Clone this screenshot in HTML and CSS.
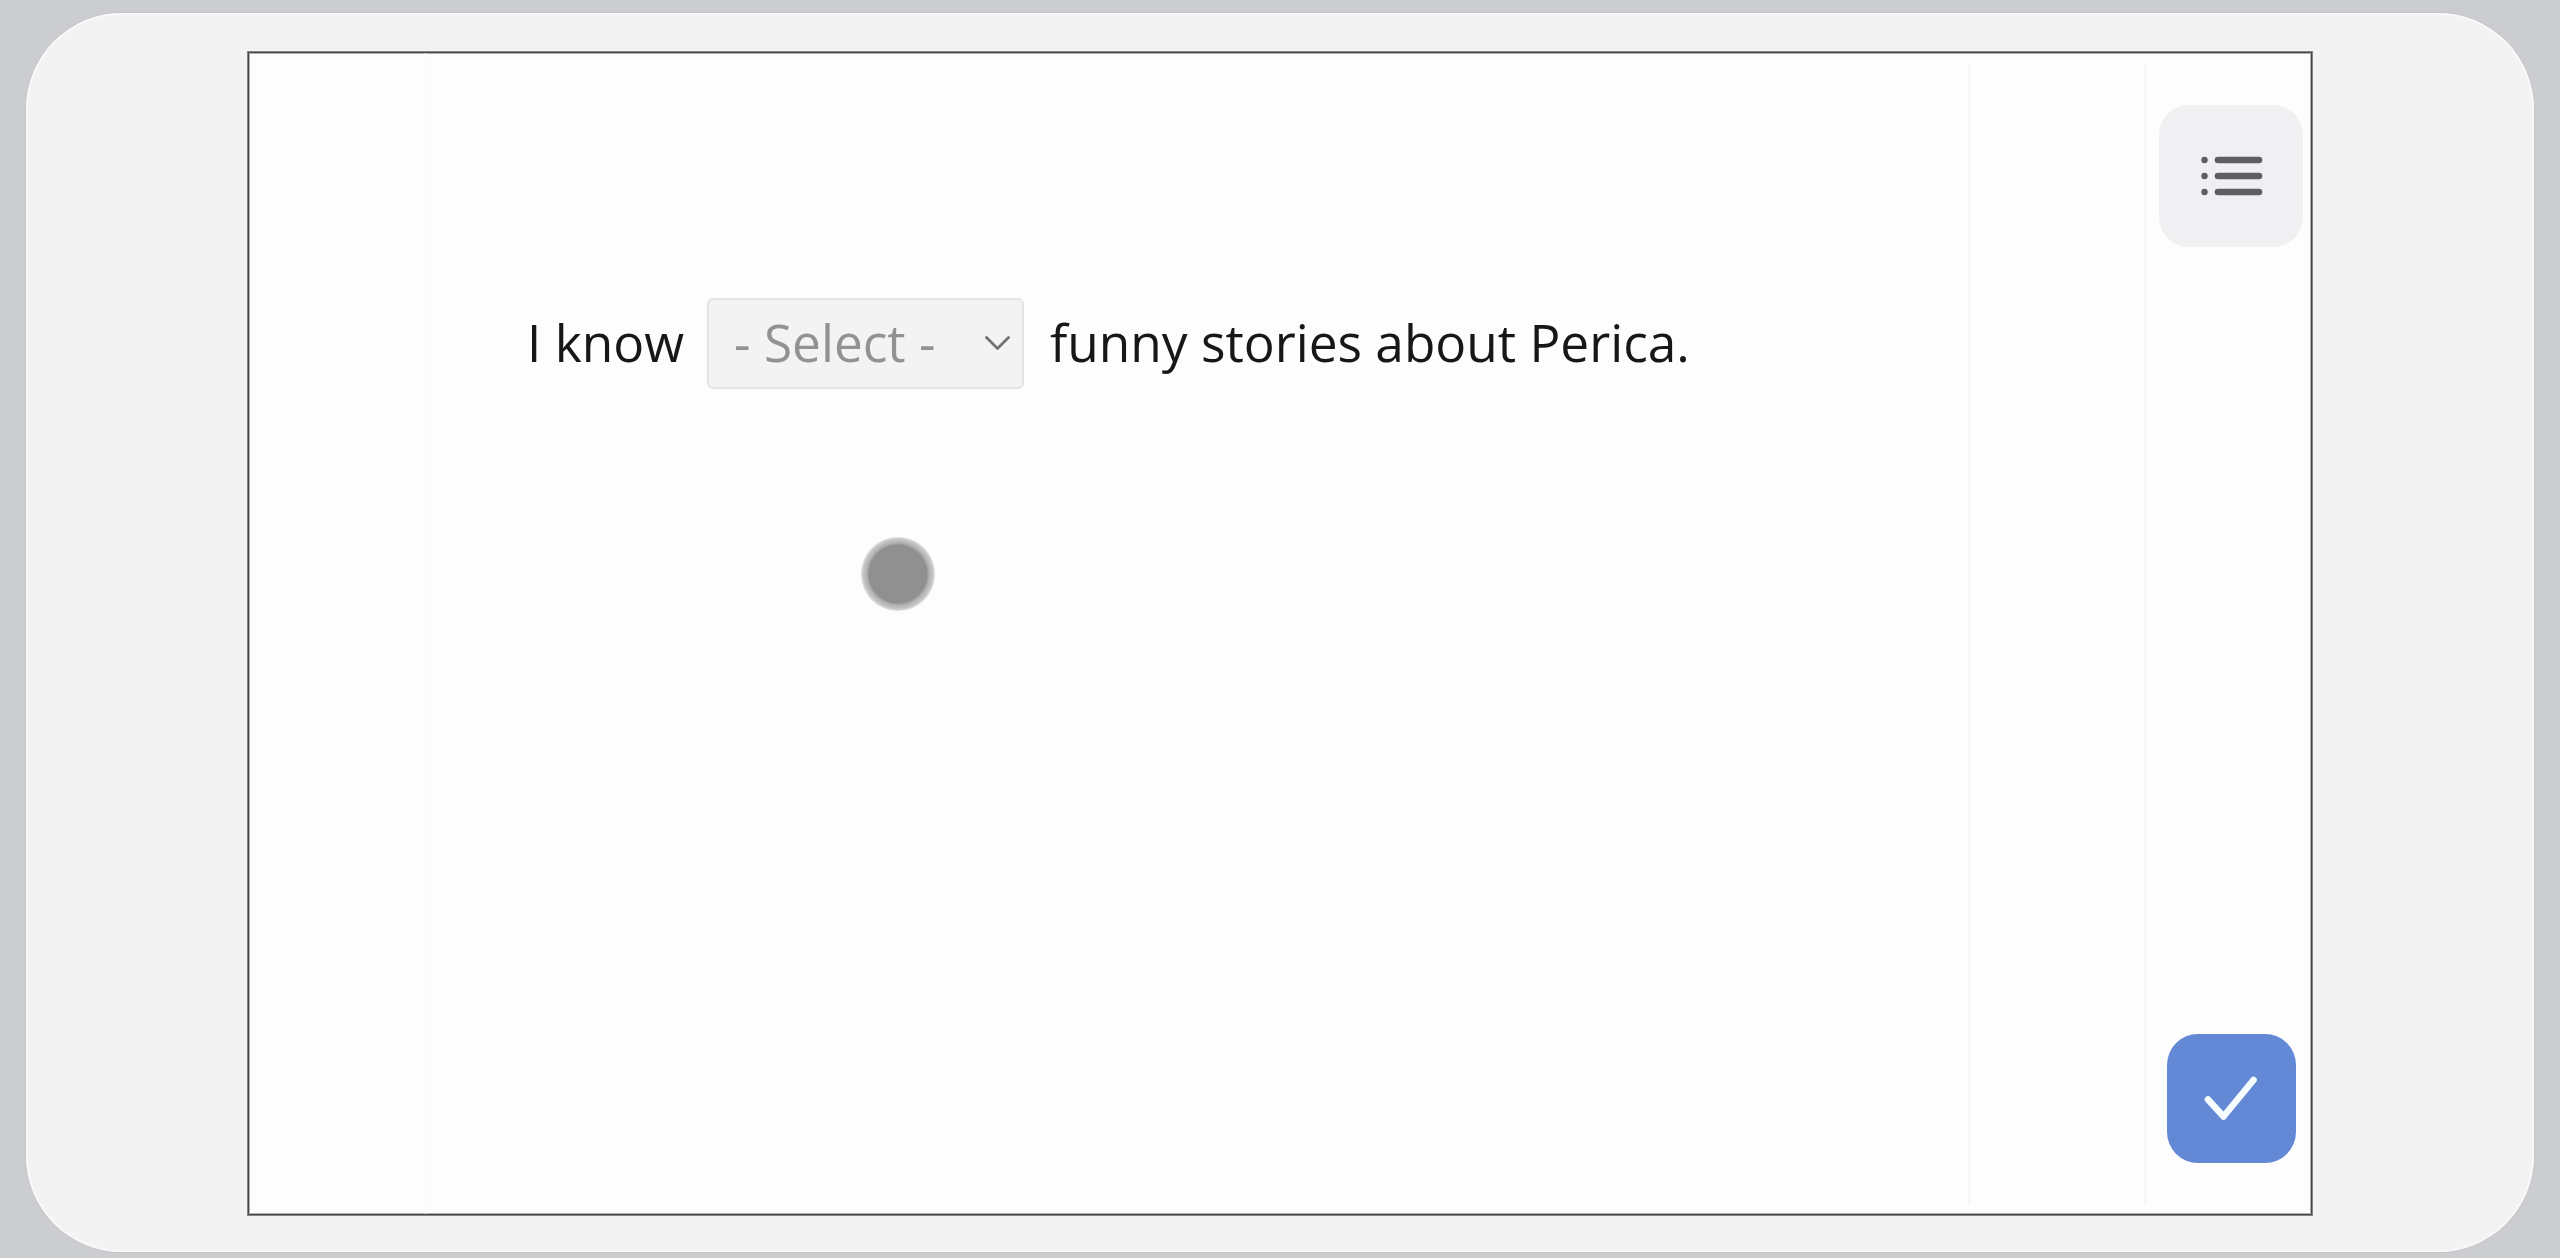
FILE: index.html
```html
<!DOCTYPE html>
<html lang="en">
<head>
<meta charset="utf-8">
<title>Grammar exercise</title>
<link rel="stylesheet" href="styles.css">
</head>
<body>
<div class="device">
  <main class="screen">
    <div class="gutter"></div>
    <section class="task">
      <p class="sentence">
        <span class="words words-start">I know</span>
        <button class="select" type="button">
          <span class="select-label">- Select -</span>
          <svg class="chevron" width="25" height="15" viewBox="0 0 25 15"><path d="M1.5 1.5 12.5 12.5 23.5 1.5"/></svg>
        </button>
        <span class="words words-end">funny stories about Perica.</span>
      </p>
    </section>
    <div class="spacer"></div>
    <aside class="tools">
      <button class="menu" type="button" aria-label="Contents">
        <svg width="64" height="48" viewBox="0 0 64 48">
          <g class="bullets"><circle cx="5.5" cy="8" r="3.2"/><circle cx="5.5" cy="24" r="3.2"/><circle cx="5.5" cy="40" r="3.2"/></g>
          <path class="bars" d="M19 8H60M19 24H60M19 40H60"/>
        </svg>
      </button>
      <button class="check" type="button" aria-label="Check">
        <svg width="56" height="48" viewBox="0 0 56 48"><path d="M5 24.5 20.5 41.5 50.5 5"/></svg>
      </button>
    </aside>
  </main>
</div>
<span class="pointer"></span>
</body>
</html>
```
FILE: styles.css
```css
* { box-sizing: border-box; }
body {
  margin: 0;
  height: 1258px;
  padding: 13px 26px 6px;
  background: #cccdd1;
  font-family: "Open Sans", sans-serif;
  overflow: hidden;
}
button { border: 0; margin: 0; padding: 0; font: inherit; }
svg { display: block; fill: none; stroke-linecap: round; stroke-linejoin: round; }
.device {
  height: 1239px;
  padding: 38px 221px 37px;
  border-radius: 96px;
  background: #f3f3f3;
  box-shadow: inset 0 0 0 2px #f8f8f9, 0 0 0 1px #c6c6c9;
}
.screen {
  display: grid;
  grid-template-columns: 177px 1fr 178px 165px;
  height: 1165px;
  padding: 1px;
  background: #fdfdfd;
  border: 1px solid #858585;
  outline: 1px solid #484848;
  outline-offset: -2px;
  box-shadow: inset 0 0 0 2px #b0b0b0;
}
.gutter { border-right: 1px solid #fafafa; }
.task { padding: 245px 0 0 101px; }
.sentence {
  display: flex;
  align-items: center;
  margin: 0;
  font-size: 51.4px;
  line-height: 91px;
  color: #171717;
  white-space: nowrap;
}
.words, .select-label { margin-top: -3px; }
.words-start { width: 180px; }
.words-end { margin-left: 26px; }
.select {
  display: flex;
  align-items: center;
  justify-content: space-between;
  width: 317px;
  height: 91px;
  padding: 0 12px 0 25px;
  border: 2px solid #e4e4e4;
  border-radius: 6px;
  background: #f3f3f3;
  color: #929292;
}
.chevron { stroke: #737373; stroke-width: 2.8; }
.spacer {
  margin: 11px 0;
  border-left: 2px solid #f6f6f6;
  border-right: 2px solid #f6f6f6;
}
.tools {
  display: flex;
  flex-direction: column;
  justify-content: space-between;
  align-items: center;
  padding: 52px 8px 51px 13px;
}
.menu, .check { display: grid; place-items: center; }
.menu {
  width: 144px;
  height: 142px;
  border-radius: 30px;
  background: #f0f0f2;
}
.bullets { fill: #5d5e62; }
.bars { stroke: #5d5e62; stroke-width: 6.6; }
.check {
  width: 129px;
  height: 129px;
  border-radius: 31px;
  background: #6388d5;
}
.check path { stroke: #f6fdff; stroke-width: 6.6; }
.pointer {
  position: absolute;
  left: 861px;
  top: 537px;
  width: 74px;
  height: 74px;
  border-radius: 50%;
  background: radial-gradient(circle closest-side, #909090 78%, #b0b0b0 84%, #c6c6c6 94%, #e2e2e2 100%);
}
```
